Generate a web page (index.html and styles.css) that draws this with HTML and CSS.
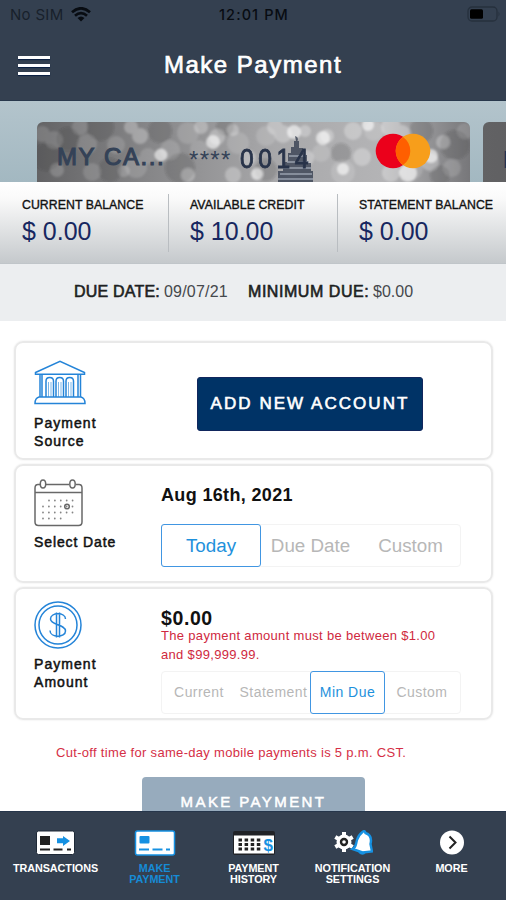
FILE: index.html
```
<!DOCTYPE html>
<html lang="en">
<head>
<meta charset="utf-8">
<title>Make Payment</title>
<link rel="stylesheet" href="styles.css">
</head>
<body>
<div class="app">
  <header class="header">
    <div class="status">
      <span class="carrier">No SIM</span>
      <svg class="wifi" width="20" height="15" viewBox="0 0 20 15"><g fill="none" stroke="#080c12" stroke-width="2.7"><path d="M1 5.3Q10-2.7 19 5.3"/><path d="M4 8.7Q10 3.4 16 8.7"/></g><path d="M6.5 11Q10 7.800 13.500 11L10 14.500Z" fill="#080c12"/></svg>
      <span class="clock">12:01 PM</span>
      <svg class="battery" width="34" height="17" viewBox="0 0 34 17"><rect x="2" y="1" width="29" height="14" rx="4" fill="none" stroke="#26303d" stroke-width="1.300"/><rect x="4" y="3.300" width="13" height="9.500" rx="1.500" fill="#000"/><path d="M32.500 5.500q2 2.500 0 5z" fill="#26303d"/></svg>
    </div>
    <div class="titlebar">
      <div class="menu"><i></i><i></i><i></i></div>
      <h1>Make Payment</h1>
    </div>
  </header>

  <main class="content">
    <section class="carousel">
      <div class="bank-card">
        <svg class="bokeh" width="433" height="60" viewBox="0 0 433 60">
          <defs>
            <linearGradient id="metal"><stop offset="0" stop-color="#636365"/><stop offset=".25" stop-color="#858587"/><stop offset=".55" stop-color="#a8a8aa"/><stop offset=".8" stop-color="#b4b4b6"/><stop offset="1" stop-color="#77777a"/></linearGradient>
            <filter id="soft" x="-5%" y="-20%" width="110%" height="140%"><feGaussianBlur stdDeviation="1.1"/></filter>
          </defs>
          <rect width="433" height="60" fill="url(#metal)"/>
          <g filter="url(#soft)" fill="#fff">
            <g fill="#333" opacity=".2"><circle cx="10" cy="35" r="14"/><circle cx="31" cy="17" r="12"/><circle cx="63" cy="5" r="14"/><circle cx="73" cy="48" r="12"/><circle cx="123" cy="9" r="12"/><circle cx="143" cy="46" r="15"/><circle cx="188" cy="5" r="9"/><circle cx="229" cy="48" r="11"/><circle cx="304" cy="31" r="10"/><circle cx="384" cy="9" r="12"/><circle cx="418" cy="23" r="15"/><circle cx="403" cy="53" r="10"/></g>
            <g opacity=".14"><circle cx="5" cy="12" r="8"/><circle cx="17" cy="18" r="9"/><circle cx="43" cy="5" r="8"/><circle cx="50" cy="22" r="10"/><circle cx="55" cy="50" r="9"/><circle cx="79" cy="23" r="9"/><circle cx="99" cy="45" r="11"/><circle cx="111" cy="34" r="8"/><circle cx="133" cy="28" r="10"/><circle cx="151" cy="11" r="11"/><circle cx="162" cy="27" r="9"/><circle cx="201" cy="21" r="11"/><circle cx="229" cy="14" r="10"/><circle cx="255" cy="47" r="9"/><circle cx="284" cy="31" r="9"/><circle cx="306" cy="50" r="12"/><circle cx="337" cy="9" r="10"/><circle cx="374" cy="46" r="12"/><circle cx="415" cy="46" r="9"/><circle cx="428" cy="9" r="8"/></g>
            <g opacity=".28"><circle cx="94" cy="5" r="7"/><circle cx="103" cy="14" r="8"/><circle cx="151" cy="53" r="7"/><circle cx="164" cy="5" r="7"/><circle cx="180" cy="15" r="8"/><circle cx="196" cy="8" r="6"/><circle cx="211" cy="36" r="8"/><circle cx="238" cy="5" r="8"/><circle cx="246" cy="12" r="9"/><circle cx="269" cy="36" r="8"/><circle cx="268" cy="9" r="6"/><circle cx="290" cy="14" r="7"/><circle cx="316" cy="9" r="9"/><circle cx="325" cy="35" r="9"/><circle cx="354" cy="5" r="10"/><circle cx="365" cy="12" r="9"/><circle cx="381" cy="28" r="10"/><circle cx="393" cy="40" r="9"/><circle cx="354" cy="51" r="9"/><circle cx="196" cy="53" r="8"/><circle cx="406" cy="20" r="7"/></g>
            <g opacity=".18"><circle cx="20" cy="48" r="7"/><circle cx="87" cy="49" r="6"/></g>
            <g opacity=".6"><circle cx="124" cy="33" r="6.500"/><circle cx="176" cy="20" r="7"/><circle cx="286" cy="16" r="7"/><circle cx="257" cy="10" r="7"/><circle cx="306" cy="47" r="6"/><circle cx="394" cy="34" r="7"/><circle cx="371" cy="51" r="9"/><circle cx="220" cy="52" r="6"/><circle cx="331" cy="3" r="6"/></g>
          </g>
          <g fill="#343e50"><path d="M258 14q4 1 2.500 5h1.500v7h4v7h4v8h4v8h2v11h-35V49h5v-9h5v-9h3v-6h3v-6h2z" opacity=".78"/><path d="M252 34h17M250 40h22M246 46h28M243 52h32M241 57h35" stroke="#98a0ad" stroke-width="1.300"/></g>
        </svg>
        <div class="card-text"><span class="card-name">MY CA...</span><span class="stars">****</span><span class="digits">0014</span></div>
        <svg class="brand" width="56" height="36" viewBox="0 0 56 36"><circle cx="18" cy="18" r="17.300" fill="#eb001b"/><circle cx="38" cy="18" r="17.300" fill="#f79e1b"/><path d="M28 3.900a17.300 17.300 0 0 1 0 28.200a17.300 17.300 0 0 1 0-28.200" fill="#ff5f00"/></svg>
      </div>
      <div class="bank-card next"><span>M</span></div>
    </section>

    <section class="balances">
      <div><h2>CURRENT BALANCE</h2><p>$ 0.00</p></div>
      <div><h2>AVAILABLE CREDIT</h2><p>$ 10.00</p></div>
      <div><h2>STATEMENT BALANCE</h2><p>$ 0.00</p></div>
    </section>
    <section class="due"><b class="date-label">DUE DATE:</b><span class="date">09/07/21</span><b class="min-label">MINIMUM DUE:</b><span>$0.00</span></section>

    <div class="panels">
      <section class="panel source">
        <div class="side">
          <svg width="52" height="45" viewBox="0 0 52 45" fill="none" stroke="#2484d8" stroke-width="1.500"><path d="M1.500 12.500L26 1.300l24.500 11.200v1.700h-49z"/><path d="M6 15v22M8 15v22M44 15v22M46.500 15v22"/><path d="M12 37V21q0-3.500 3.700-3.500T19.500 21v16M22 37V21q0-3.500 3.700-3.500T29.500 21v16M32 37V21q0-3.500 3.700-3.500T39.500 21v16"/><path d="M14.500 22v15M17 22v15M24.500 22v15M27 22v15M34.500 22v15M37 22v15" stroke-width=".6"/><path d="M5 37h42q4 1 4 6.500H1Q1 38 5 37z"/></svg>
          <h3>Payment<br>Source</h3>
        </div>
        <button class="add">ADD NEW ACCOUNT</button>
      </section>
      <section class="panel when">
        <div class="side">
          <svg width="49" height="48" viewBox="0 0 49 48"><g fill="none" stroke="#686868" stroke-width="1.500"><path d="M6 5.500H4Q1 5.500 1 9v34q0 3.500 3.500 3.500h40Q48 46.500 48 43V9q0-3.500-3-3.500h-3M12 5.500h23M1 13.500h47"/><ellipse cx="9" cy="5" rx="2.700" ry="4"/><ellipse cx="38.500" cy="5" rx="2.700" ry="4"/><circle cx="33" cy="27.500" r="2.300"/></g><g fill="none" stroke="#858585" stroke-width="1.800" stroke-linecap="round" stroke-dasharray="0 5.900"><path d="M15 21.500h25M9 27.500h31M9 33.500h31M9 39.500h19"/></g></svg>
          <h3>Select Date</h3>
        </div>
        <div class="details">
          <p class="value">Aug 16th, 2021</p>
          <div class="segments three"><span class="on">Today</span><span>Due Date</span><span>Custom</span></div>
        </div>
      </section>
      <section class="panel amount">
        <div class="side">
          <svg width="48" height="48" viewBox="0 0 48 48" fill="none" stroke="#2484d8" stroke-width="1.500"><circle cx="24" cy="24" r="23"/><circle cx="24" cy="24" r="19"/><path d="M31.500 18c0-7-15-7-15 0 0 6.500 15 5 15 12 0 7-15.500 7-15.500-.500M22.500 11.500v25M25.500 11.500v25"/></svg>
          <h3>Payment<br>Amount</h3>
        </div>
        <div class="details">
          <p class="value">$0.00</p>
          <p class="error">The payment amount must be between $1.00<br>and $99,999.99.</p>
          <div class="segments four"><span>Current</span><span>Statement</span><span class="on">Min Due</span><span>Custom</span></div>
        </div>
      </section>
    </div>
    <p class="cutoff">Cut-off time for same-day mobile payments is 5 p.m. CST.</p>
    <button class="submit">MAKE PAYMENT</button>
  </main>

  <nav class="tabs">
    <a><svg width="42" height="28" viewBox="0 0 42 28"><rect x="1.500" y="2" width="38" height="23.500" rx="2" fill="#fff" stroke="#1e2937"/><path d="M5 7h10v9H5z" fill="#222"/><path d="M5 20.500h10M18.500 20.500h9M32 20.500h4" stroke="#222" stroke-width="2"/><path d="M22 9.300h6V7l7 5-7 5v-2.700h-6z" fill="#1691e2"/></svg><span>TRANSACTIONS</span></a>
    <a class="current"><svg width="42" height="28" viewBox="0 0 42 28"><rect x="1.500" y="2" width="39" height="24" rx="2" fill="#fff" stroke="#1691e2" stroke-width="1.500"/><rect x="5.500" y="7" width="10" height="7.500" rx="1" fill="#1691e2"/><path d="M5 20.500h10M18.500 20.500h10M32 20.500h4" stroke="#1691e2" stroke-width="1.800"/></svg><span>MAKE<br>PAYMENT</span></a>
    <a><svg width="44" height="28" viewBox="0 0 44 28"><rect x="1" y="2" width="42" height="24" rx="2" fill="#202226"/><path d="M2 6.500h40v18H2z" fill="#fff"/><path d="M6.500 11h22M6.500 15.500h22M6.500 20h22" stroke="#222" stroke-width="3" stroke-dasharray="3.500 2.600"/><text x="31.500" y="21.500" class="dollar">$</text></svg><span>PAYMENT<br>HISTORY</span></a>
    <a><svg width="40" height="28" viewBox="0 0 40 28"><path d="M11 3v20M2.300 8l17.400 10M2.300 18L19.700 8" stroke="#fff" stroke-width="4"/><circle cx="11" cy="13" r="7.500" fill="#fff"/><circle cx="11" cy="13" r="3" fill="#fff" stroke="#222" stroke-width="2.400"/><path d="M26 23h6q-2 3.500-6 0" fill="#1691e2" stroke="#1691e2" stroke-width="2"/><path d="M29.500 3q2-2 3 1c6 2 6 7 5 11l1.500 7.500-9.500 1L19.500 20c4-2 3-4 4.500-9q1.500-5 5.500-8z" fill="#fff" stroke="#1691e2" stroke-width="2.400"/></svg><span>NOTIFICATION<br>SETTINGS</span></a>
    <a><svg width="28" height="28" viewBox="0 0 28 28"><circle cx="14" cy="13.500" r="12" fill="#fff"/><path d="M11.500 7.500l6 6-6 6" fill="none" stroke="#222" stroke-width="2"/></svg><span>MORE</span></a>
  </nav>
</div>
</body>
</html>
```
FILE: styles.css
```
* { box-sizing: border-box; }
body, h1, h2, h3, p { margin: 0; }
h1, h2, h3 { font-weight: 400; }
body { font-family: "Liberation Sans", sans-serif; color: #111; background: #fff; }
svg { display: block; flex: none; }
button { font: inherit; border: 0; padding: 0; }
.app { height: 900px; width: 506px; overflow: hidden; display: flex; flex-direction: column; }

.header { height: 101px; background: #344050; border-bottom: 1px solid #28384c; flex: none; }
.status { height: 29px; padding: 0 6px 0 10px; display: grid; grid-template-columns: 61px 148px 1fr auto; align-items: center; font-family: Inter, sans-serif; font-size: 15px; }
.carrier { color: #18202b; letter-spacing: .3px; }
.clock { color: #080c12; font-weight: 500; letter-spacing: 1.1px; font-size: 14.5px; white-space: nowrap; }
.titlebar { height: 72px; display: grid; grid-template-columns: 164px 1fr; align-items: center; }
.menu { margin-left: 18px; width: 32px; display: grid; gap: 5px; }
.menu i { height: 3px; background: #fff; box-shadow: 0 1px 1px #081e42; }
h1 { color: #fff; font-size: 24px; letter-spacing: 1.5px; -webkit-text-stroke: .7px #fff; text-shadow: 0 1px 1px #182a45; }

.content { flex: 1; min-height: 0; overflow: hidden; }
.carousel { height: 81px; padding: 21px 0 0 37px; display: flex; gap: 13px; background: linear-gradient(180deg, #b3c4cc, #a3b8c1); overflow: hidden; }
.bank-card { position: relative; width: 433px; height: 60px; flex: none; border-radius: 6px 6px 0 0; overflow: hidden; }
.bokeh { position: absolute; inset: 0; }
.card-text { position: relative; height: 60px; padding: 10px 0 0 20px; display: flex; align-items: center; color: #344257; font-size: 24px; }
.card-name { width: 132px; letter-spacing: 1.6px; -webkit-text-stroke: 1.1px #344257; }
.stars { width: 51px; letter-spacing: 1.3px; padding-top: 5px; }
.digits { font-size: 27px; letter-spacing: 5px; -webkit-text-stroke: .9px #29344a; color: #29344a; padding-top: 4px; transform: scaleX(.91); transform-origin: left; }
.brand { position: absolute; left: 338px; top: 11px; }
.next { background: linear-gradient(90deg, #626264, #454548); padding: 24px 0 0 20px; font-size: 24px; color: #243452; font-weight: bold; }

.balances { height: 82px; padding: 12px 0; display: grid; grid-template-columns: 168px 169px 1fr; background: linear-gradient(#fff, #fafafa 20%, #c5c9cc); border-bottom: 1px solid #c0c5c9; }
.balances div { padding: 4px 0 0 22px; white-space: nowrap; height: 58px; }
.balances div + div { border-left: 1px solid #b9bdc1; padding-left: 21px; }
.balances h2 { font-size: 12.3px; line-height: 15px; -webkit-text-stroke: .35px #111; letter-spacing: .05px; }
.balances p { font-size: 25px; line-height: 36px; color: #172760; }
.due { height: 57px; background: #eceef0; display: flex; align-items: center; padding: 0 0 1px 74px; font-size: 16px; color: #45484c; }
.due b { font-weight: 400; color: #1d1f22; -webkit-text-stroke: .6px #1d1f22; }
.date-label { width: 90px; letter-spacing: .2px; }
.date { width: 84px; letter-spacing: .2px; }
.min-label { width: 125px; letter-spacing: .55px; }

.panels { padding: 20px 13px 0 14px; display: grid; gap: 4px; }
.panel { border: 2px solid #e9e9e9; border-radius: 9px; display: grid; grid-template-columns: 145px 1fr; box-shadow: 0 0 2px #e5e5e5; }
.side { padding-left: 18px; }
h3 { font-size: 14px; line-height: 17.5px; letter-spacing: 1.05px; -webkit-text-stroke: .5px #111; }
.source { height: 119px; }
.source .side { padding-top: 17px; }
.source h3 { margin-top: 10px; }
.add { width: 226px; height: 54px; margin: 34px 0 0 36px; border-radius: 3px; background: #003366; color: #fff; font-size: 17px; letter-spacing: 2.05px; -webkit-text-stroke: .6px #fff; border: 1px solid #11275d; }
.when { height: 119px; }
.when .side { padding-top: 13px; }
.when h3 { margin-top: 7px; letter-spacing: .9px; white-space: nowrap; }
.value { font-weight: bold; font-size: 18px; line-height: 22px; letter-spacing: .35px; }
.when .value { padding-top: 18px; }
.segments { width: 300px; height: 43px; display: grid; border: 1px solid #f3f3f3; border-radius: 4px; color: #b7b7b7; }
.segments span { display: flex; align-items: center; justify-content: center; white-space: nowrap; }
.segments .on { color: #1e91dc; border: 1.5px solid #4196e2; border-radius: 3px; margin: -1px; }
.three { grid-template-columns: 98px 101px 1fr; margin-top: 18px; font-size: 18.8px; }
.four { grid-template-columns: 74px 75px 73px 1fr; margin-top: 6px; font-size: 14px; letter-spacing: .45px; }
.four span { padding: 0 0 1px; }
.amount { height: 133px; }
.amount .side { padding-top: 12px; }
.amount h3 { margin-top: 7px; }
.amount .value { font-size: 19.5px; letter-spacing: .6px; padding-top: 19px; line-height: 20px; }
.error { color: #cf2940; font-size: 13px; line-height: 18.5px; letter-spacing: .32px; white-space: nowrap; position: relative; top: -1px; }
.cutoff { color: #d52f46; font-size: 13px; line-height: 16px; letter-spacing: .31px; margin: 25px 0 0 56px; white-space: nowrap; }
.submit { display: block; width: 223px; height: 54px; margin: 16px 0 0 142px; padding-bottom: 6px; background: #97abbd; color: #fff; border-radius: 4px; font-size: 15px; letter-spacing: 2.4px; -webkit-text-stroke: .5px #fff; }

.tabs { height: 89px; flex: none; padding: 17px 5px 0 6px; background: #344050; border-top: 1px solid #26364b; display: grid; grid-template-columns: repeat(5, 99px); }
.tabs a { display: flex; flex-direction: column; align-items: center; text-align: center; color: #fff; }
.tabs span { font-size: 10.8px; line-height: 11px; font-weight: bold; margin-top: 6px; white-space: nowrap; letter-spacing: -.05px; }
.tabs .current { color: #168bd6; }
.dollar { font: bold 17px "Liberation Sans", sans-serif; fill: #1691e2; }
```
